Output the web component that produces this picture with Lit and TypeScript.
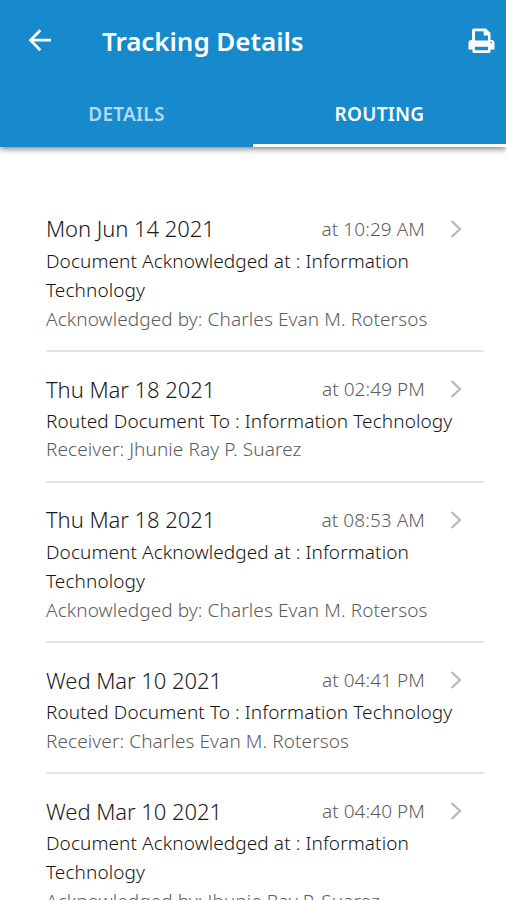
import { LitElement, html, css } from "lit";
import { customElement } from "lit/decorators.js";

interface Entry { date: string; time: string; lines: string[]; person: string; }

const ENTRIES: Entry[] = [
  { date: "Mon Jun 14 2021", time: "at 10:29 AM", lines: ["Document Acknowledged at : Information", "Technology"], person: "Acknowledged by: Charles Evan M. Rotersos" },
  { date: "Thu Mar 18 2021", time: "at 02:49 PM", lines: ["Routed Document To : Information Technology"], person: "Receiver: Jhunie Ray P. Suarez" },
  { date: "Thu Mar 18 2021", time: "at 08:53 AM", lines: ["Document Acknowledged at : Information", "Technology"], person: "Acknowledged by: Charles Evan M. Rotersos" },
  { date: "Wed Mar 10 2021", time: "at 04:41 PM", lines: ["Routed Document To : Information Technology"], person: "Receiver: Charles Evan M. Rotersos" },
  { date: "Wed Mar 10 2021", time: "at 04:40 PM", lines: ["Document Acknowledged at : Information", "Technology"], person: "Acknowledged by: Jhunie Ray P. Suarez" },
];

@customElement("app-root")
export class AppRoot extends LitElement {
  static styles = css`
    :host { display: block; height: 900px; overflow: hidden; background: #fff; font-family: "Noto Sans", "Open Sans", sans-serif; }
    * { box-sizing: border-box; }
    header { background: #168acd; color: #fff; height: 147px; box-shadow: 0 2px 6px rgba(0,0,0,.5); }
    .bar { height: 82px; display: flex; align-items: center; padding: 0 11px 0 28px; }
    .back { width: 24px; margin-right: 50px; }
    .title { font-size: 26px; font-weight: 600; letter-spacing: -0.05px; flex: 1; white-space: nowrap; }
    svg { display: block; flex: none; }
    .tabs { display: flex; height: 65px; }
    .tab { flex: 1; text-align: center; line-height: 65px; font-size: 19px; letter-spacing: 0.25px; font-weight: 600; color: #b4daf0; }
    .active { color: #fff; border-bottom: 3px solid #fff; }
    .list { padding: 63px 22px 0 46px; }
    .item { border-bottom: 2px solid #e4e4e4; padding-bottom: 17.35px; margin-bottom: 18.5px; white-space: nowrap; }
    .top { display: flex; align-items: center; height: 36.5px; }
    .date { font-size: 22px; letter-spacing: -0.06px; color: #1a1a1a; flex: 1; font-weight: 350; }
    .time { font-size: 19px; letter-spacing: 0.07px; color: #5c5c5c; margin-right: 25px; padding-top: 1px; font-weight: 350; }
    .chev { margin: 1px 22px 0 0; }
    .line { font-size: 19px; letter-spacing: 0.09px; line-height: 29.5px; color: #151515; font-weight: 350; }
    .person { font-size: 19px; letter-spacing: 0.09px; line-height: 27px; color: #5c5c5c; font-weight: 350; }
  `;
  render() {
    return html`
      <header>
        <div class="bar">
          <svg class="back" width="24" height="24" viewBox="0 0 24 24" fill="none" stroke="#fff" stroke-width="2.7"><path d="M23 11.2H3M12.3 1.2L2.5 11.2L12.3 21.2"/></svg>
          <span class="title">Tracking Details</span>
          <svg width="27" height="26" viewBox="0 0 27 26"><path fill="#fff" fill-rule="evenodd" d="M6 .5H18L22.5 5V12H23.5C25.4 12 26.5 13.3 26.5 15V21.5H22.5V23.5C22.5 24.5 22 25 21 25H6C5 25 4.5 24.5 4.5 23.5V21.5H.5V15C.5 13.3 1.6 12 3.5 12H4V2.5C4 1.3 4.8.5 6 .5ZM7 3.2V12.5H20V7.5H15.7V3.2ZM7 18.7V22.3H20V18.7ZM23.2 13.8A.8.8 0 1 0 23.2 15.4A.8.8 0 1 0 23.2 13.8Z"/></svg>
        </div>
        <div class="tabs"><div class="tab">DETAILS</div><div class="tab active">ROUTING</div></div>
      </header>
      <div class="list">
        ${ENTRIES.map(e => html`<div class="item">
          <div class="top"><span class="date">${e.date}</span><span class="time">${e.time}</span>
          <svg class="chev" width="12" height="18" viewBox="0 0 12 18" fill="none" stroke="#bbb" stroke-width="2.4"><path d="M1.5 1L10 9L1.5 17"/></svg></div>
          ${e.lines.map(l => html`<div class="line">${l}</div>`)}
          <div class="person">${e.person}</div>
        </div>`)}
      </div>`;
  }
}
